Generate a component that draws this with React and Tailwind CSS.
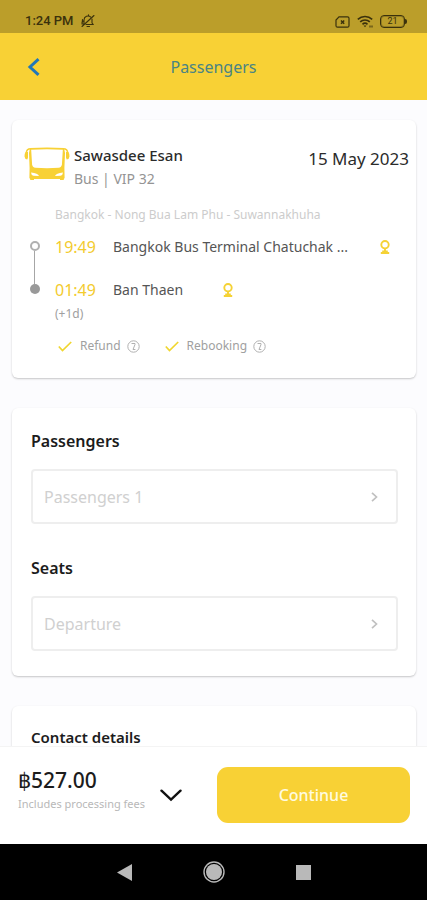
import React from "react";

function StatusBar() {
  return (
    <div className="flex h-[33px] shrink-0 items-end justify-between bg-[#bb9e2a] pr-[20px] pb-[3px] pl-[25px] text-[#3a310c]">
      <div className="flex items-center gap-[7px]">
        <span className="font-['Roboto',sans-serif] text-[13px] leading-[18px] font-medium">1:24 PM</span>
        <svg className="size-[14px]" viewBox="0 0 14 14" fill="none" stroke="currentColor" strokeWidth="1.1" strokeLinecap="round" strokeLinejoin="round">
          <path d="M3 9.500V6a4 4 0 0 1 6.800-2.800M11 5v4l1.300 1.500H5" />
          <path d="M13 1.500 1 12.500M1 8.500l1.500-1.500M1.500 5.500 1 10h2M6 12.500h2.500M7.500 1.600V.8" />
        </svg>
      </div>
      <div className="flex items-center gap-[7px] pb-[2px]">
        <svg className="h-[12px] w-[15px]" viewBox="0 0 15 12" fill="none" stroke="currentColor" strokeWidth="1.200">
          <path d="M4 .8h8.500q1.500 0 1.500 1.500v7.400q0 1.500-1.500 1.500h-10Q1 11.200 1 9.700V4z" />
          <path d="m6 4.500 3.200 3.200M9.200 4.500 6 7.700" strokeWidth="1.500" />
        </svg>
        <svg className="h-[13px] w-[16px]" viewBox="0 0 16 13" fill="none" stroke="currentColor" strokeWidth="1.600">
          <path d="M.8 4.300a10.500 10.500 0 0 1 14.400 0M3.200 6.900a7 7 0 0 1 9.600 0M5.500 9.300a3.600 3.600 0 0 1 5 0" />
          <path d="m6.500 10.500 1.500 1.800 1.500-1.800z" fill="currentColor" stroke="none" />
          <path d="M13 10.500v2M15 10.500v2" strokeWidth="1" />
        </svg>
        <div className="flex items-center">
          <span className="flex h-[13px] w-[25px] items-center justify-center rounded-[4px] border border-current font-['Roboto',sans-serif] text-[9px] leading-none ring-1 ring-current/30 ring-inset">21</span>
          <span className="h-[5px] w-[2px] rounded-r-sm bg-current" />
        </div>
      </div>
    </div>
  );
}

function BusIcon() {
  return (
    <svg className="h-[34px] w-[46px] shrink-0" viewBox="0 0 46 34">
      <path
        fill="#f8d135"
        d="M6 1Q23 0 40 1l1 5-.6 15 .2 10-.8 1v1H36v-1H10v1H6.200v-1l-.8-1 .2-10L5 6z"
      />
      <path fill="#ffffff" d="M7.200 2.800Q23 1.800 38.800 2.800l-.9 14.700q-.3 3-3.400 3.300-11.500.9-23 0-3.100-.3-3.400-3.300z" />
      <path fill="#ffffff" d="M7 25.500q3.500.3 5.500 1.200 2 .8 2.500 2.300l-5.500-.2Q7.200 28.300 7 25.500zM39 25.500q-3.500.3-5.500 1.200-2 .8-2.500 2.300l5.500-.2q2.300-.5 2.500-3.300z" />
      <path d="M7 1.700Q2.500 1.500 2.300 6M39 1.700q4.500-.2 4.700 4.300" fill="none" stroke="#f8d135" strokeWidth="1.500" />
      <path d="M1.600 5Q.3 7 .5 9.500l1 2.500 1.800.5.700-2V5zM44.400 5q1.300 2 1.100 4.500l-1 2.500-1.800.5-.7-2V5z" fill="#f8d135" />
    </svg>
  );
}

function PinIcon() {
  return (
    <svg className="h-[14px] w-[10px] shrink-0" viewBox="0 0 10 14" fill="none" stroke="#f5d235" strokeWidth="1.900">
      <circle cx="5" cy="4.700" r="3.700" />
      <path d="M5 8v4M.8 13h8.400M2.200 11.500h5.600" />
    </svg>
  );
}

function InfoIcon() {
  return (
    <svg className="size-[13px] shrink-0" viewBox="0 0 13 13" fill="none" stroke="#b0b0b0" strokeWidth="1">
      <circle cx="6.500" cy="6.500" r="5.700" />
      <path d="M4.500 3.500H8v1L6 9.500h2.400" />
    </svg>
  );
}

function CheckIcon() {
  return (
    <svg className="h-[11px] w-[14px] shrink-0" viewBox="0 0 14 11" fill="none" stroke="#f0d62f" strokeWidth="1.700">
      <path d="m.8 5.500 3.700 4L13.200 1" />
    </svg>
  );
}

function Policy({ label }) {
  return (
    <div className="flex items-center text-[12px] leading-[16px] text-[#a0a0a0]">
      <CheckIcon />
      <span className="pr-[6px] pl-[8px]">{label}</span>
      <InfoIcon />
    </div>
  );
}

const cardStyle = "rounded-[6px] bg-white shadow-[0_1px_2px_rgba(0,0,0,0.22)]";

function TripCard() {
  return (
    <section className={`${cardStyle} pt-[23px] pb-[24px]`}>
      <div className="flex items-start pr-[7px] pl-[12px]">
        <div className="flex pt-[4px]">
          <BusIcon />
        </div>
        <div className="grow pl-[4px]">
          <h2 className="text-[15px] leading-[24px] font-medium text-[#2b2b2b]">Sawasdee Esan</h2>
          <p className="text-[14px] leading-[24px] text-[#949494]">Bus | VIP 32</p>
        </div>
        <time className="pt-[4px] text-[17px] leading-[24px] text-[#2b2b2b]">15 May 2023</time>
      </div>

      <p className="pt-[16px] pl-[43px] text-[12px] leading-[16px] text-[#cccccc]">Bangkok - Nong Bua Lam Phu - Suwannakhuha</p>

      <div className="flex pt-[12px] pl-[17px]">
        <div className="flex w-[11px] shrink-0 flex-col items-center pt-[6px]">
          <span className="size-[10px] rounded-full border-2 border-[#b0b0b0]" />
          <span className="h-[33px] w-px bg-[#a6a6a6]" />
          <span className="size-[10px] rounded-full bg-[#999999]" />
        </div>
        <div className="flex min-w-0 grow flex-col pr-[26px] pl-[15px]">
          <div className="flex h-[24px] items-center">
            <span className="w-[58px] shrink-0 text-[16px] leading-[24px] text-[#f3cb2e]">19:49</span>
            <span className="min-w-0 grow truncate text-[14px] leading-[24px] text-[#555555]">Bangkok Bus Terminal Chatuchak ...</span>
            <PinIcon />
          </div>
          <div className="mt-[19px] flex h-[24px] items-center">
            <span className="w-[58px] shrink-0 text-[16px] leading-[24px] text-[#f3cb2e]">01:49</span>
            <span className="pr-[40px] text-[14px] leading-[24px] text-[#555555]">Ban Thaen</span>
            <PinIcon />
          </div>
          <p className="text-[12px] leading-[24px] text-[#a0a0a0]">(+1d)</p>
          <div className="flex gap-[25px] pt-[12px] pl-[3px]">
            <Policy label="Refund" />
            <Policy label="Rebooking" />
          </div>
        </div>
      </div>
    </section>
  );
}

function PickerField({ id, title, value }) {
  return (
    <div className="flex flex-col gap-[16px]">
      <h2 id={id} className="text-[16px] leading-[24px] font-semibold text-[#1c1c1c]">{title}</h2>
      <button type="button" aria-labelledby={`${id} ${id}-value`} className="flex h-[55px] w-full items-center justify-between rounded-[4px] border-2 border-[#eeeeee] bg-white pr-[18px] pl-[11px] text-left">
        <span id={`${id}-value`} className="text-[16px] leading-[24px] text-[#d0d0d0]">{value}</span>
        <svg className="h-[10px] w-[7px]" viewBox="0 0 7 10" fill="none" stroke="#c0c0c0" strokeWidth="1.700">
          <path d="m1 .8 4.500 4.200L1 9.200" />
        </svg>
      </button>
    </div>
  );
}

function Footer() {
  return (
    <footer className="flex h-[98px] shrink-0 items-start border-t border-[#f4f4f4] bg-white pt-[20px] pr-[17px] pl-[18px]">
      <div className="flex grow items-center justify-between pr-[35px]">
        <div>
          <p className="text-[21px] leading-[26px] font-medium text-[#1c1c1c]">฿527.00</p>
          <p className="text-[11px] leading-[22px] whitespace-nowrap text-[#b8b8b8]">Includes processing fees</p>
        </div>
        <button type="button" aria-label="Show price details" className="pt-[8px]">
          <svg className="h-[13px] w-[22px]" viewBox="0 0 22 13" fill="none" stroke="#111111" strokeWidth="2.400" strokeLinecap="round">
            <path d="m1.500 1.700 9.500 9 9.500-9" />
          </svg>
        </button>
      </div>
      <button type="button" className="h-[56px] w-[193px] shrink-0 rounded-[11px] bg-[#f8d135] text-[16px] font-medium text-[#fffbe0]">Continue</button>
    </footer>
  );
}

function SystemNav() {
  return (
    <nav className="flex h-[56px] shrink-0 items-center justify-center gap-[71px] bg-black">
      <button type="button" aria-label="Back">
        <svg className="h-[17px] w-[15px]" viewBox="0 0 15 17" fill="#b9b9b9"><path d="M15 0v17L0 8.500z" /></svg>
      </button>
      <button type="button" aria-label="Home">
        <svg className="size-[22px]" viewBox="0 0 22 22">
          <circle cx="11" cy="11" r="10" fill="none" stroke="#b9b9b9" strokeWidth="1.400" />
          <circle cx="11" cy="11" r="8" fill="#b9b9b9" />
        </svg>
      </button>
      <button type="button" aria-label="Recent apps">
        <svg className="size-[15px]" viewBox="0 0 15 15" fill="#b9b9b9"><path d="M0 0h15v15H0z" /></svg>
      </button>
    </nav>
  );
}

export default function App() {
  return (
    <div className="flex h-screen flex-col overflow-hidden bg-[#fcfcfe] font-['Noto_Sans','Open_Sans',sans-serif]">
      <StatusBar />
      <header className="grid h-[67px] shrink-0 grid-cols-[1fr_auto_1fr] items-center bg-[#f8d135] px-[27px]">
        <button type="button" aria-label="Back" className="justify-self-start">
          <svg className="h-[18px] w-[13px]" viewBox="0 0 13 18" fill="none" stroke="#2277b8" strokeWidth="3">
            <path d="M11.500 1.200 3 9l8.500 7.800" />
          </svg>
        </button>
        <h1 className="text-[16px] leading-[24px] text-[#4a8484]">Passengers</h1>
      </header>
      <main className="flex min-h-0 grow flex-col gap-[30px] overflow-hidden pt-[20px] pr-[11px] pl-[12px] *:shrink-0">
        <TripCard />
        <section className={`${cardStyle} flex flex-col gap-[32px] pt-[21px] pr-[18px] pb-[25px] pl-[19px]`}>
          <PickerField id="passengers" title="Passengers" value="Passengers 1" />
          <PickerField id="seats" title="Seats" value="Departure" />
        </section>
        <section className={`${cardStyle} pt-[19px] pr-[18px] pb-[24px] pl-[19px]`}>
          <h2 className="text-[15px] leading-[24px] font-semibold text-[#1c1c1c]">Contact details</h2>
        </section>
      </main>
      <Footer />
      <SystemNav />
    </div>
  );
}
